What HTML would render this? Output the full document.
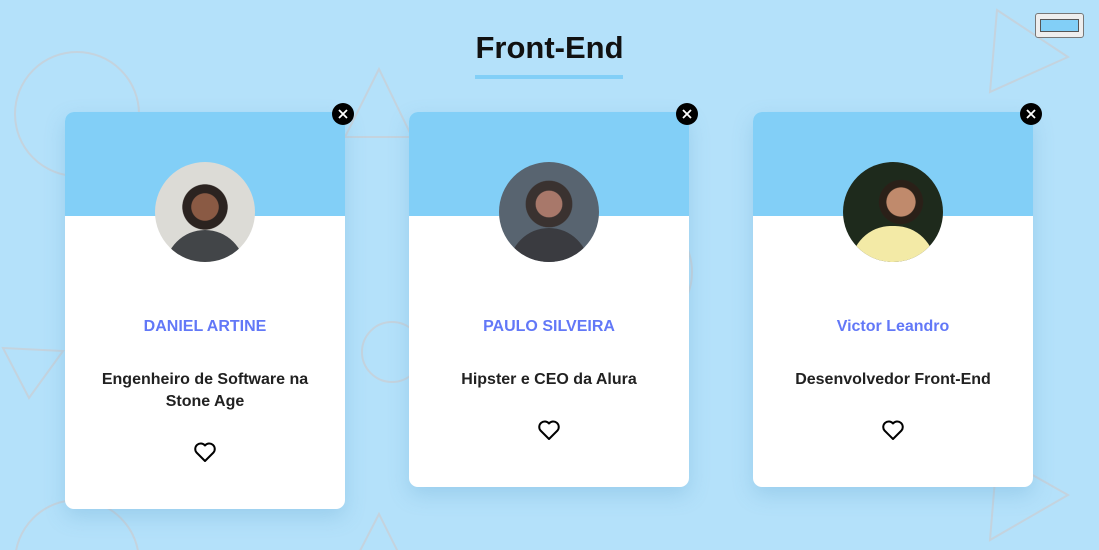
<!DOCTYPE html>
<html><head><meta charset="utf-8"><style>
*{box-sizing:border-box;margin:0;padding:0}
html,body{width:1099px;height:550px;overflow:hidden}
body{background:#b4e1fa;font-family:"Liberation Sans","DejaVu Sans",sans-serif;position:relative}
svg.bg{position:absolute;left:0;top:0}
h1{position:absolute;top:30px;left:0;width:1099px;text-align:center;font-size:31px;font-weight:bold;color:#111}
.ul{position:absolute;left:475px;top:75px;width:148px;height:4px;background:#82cff7}
.btn{position:absolute;left:1035px;top:13px;width:49px;height:25px;background:#eee;border:1px solid #777;border-radius:3px}
.btn i{position:absolute;left:4px;top:5px;width:39px;height:13px;background:#82cff7;border:1px solid #555}
.card{position:absolute;top:112px;width:280px;background:#fff;border-radius:9px;box-shadow:0 8px 20px rgba(80,150,200,.25);text-align:center}
.card .hd{height:104px;background:#82cff7;border-radius:9px 9px 0 0}
.av{position:absolute;left:90px;top:50px;width:100px;height:100px;border-radius:50%;overflow:hidden}
.nm{position:absolute;top:206px;left:0;width:100%;font-size:16px;font-weight:bold;color:#6278f7}
.ds{position:absolute;top:257px;left:20px;width:240px;font-size:16px;font-weight:bold;color:#212121;line-height:22px}
.ht{position:absolute;left:128px;width:24px;height:22px}
.x{position:absolute;top:-9px;right:-9px;width:22px;height:22px;border-radius:50%;background:#000}
</style></head><body>
<svg class="bg" width="1099" height="550" fill="none" stroke="#c4d3de" stroke-width="2">
<circle cx="77" cy="114" r="62"/>
<polygon points="379,69 345,137 412,137"/>
<polygon points="3,348 63,351 29,398"/>
<circle cx="392" cy="352" r="30"/>
<circle cx="630" cy="272" r="62"/>
<polygon points="997,10 1068,57 990,92"/>
<polygon points="997,455 1068,495 990,540"/>
<circle cx="77" cy="562" r="62"/>
<polygon points="379,514 345,580 412,580"/>
</svg>
<h1>Front-End</h1><div class="ul"></div>
<div class="btn"><i></i></div>

<div class="card" style="left:65px;height:397px"><div class="hd"></div>
<div class="av" style="background:radial-gradient(circle at 50% 45%,#8a5a44 0 18%,#2b2320 19% 30%,#dcdbd6 31%);"><div style="position:absolute;left:10px;top:68px;width:80px;height:40px;border-radius:40px 40px 0 0;background:#424548"></div></div>
<div class="nm">DANIEL ARTINE</div>
<div class="ds">Engenheiro de Software na Stone Age</div>
<svg class="ht" style="top:329px" viewBox="0 0 24 22"><path d="M12 20 L3.5 11.5 A5 5 0 0 1 12 4.5 A5 5 0 0 1 20.5 11.5 Z" fill="none" stroke="#000" stroke-width="2" stroke-linejoin="round"/></svg>
<div class="x"><svg width="22" height="22"><path d="M7 7L15 15M15 7L7 15" stroke="#fff" stroke-width="1.8"/></svg></div></div>

<div class="card" style="left:409px;height:375px"><div class="hd"></div>
<div class="av" style="background:radial-gradient(circle at 50% 42%,#a8786a 0 17%,#3a3230 18% 30%,#586470 31%);"><div style="position:absolute;left:10px;top:66px;width:80px;height:40px;border-radius:40px 40px 0 0;background:#3a3b40"></div></div>
<div class="nm">PAULO SILVEIRA</div>
<div class="ds">Hipster e CEO da Alura</div>
<svg class="ht" style="top:307px" viewBox="0 0 24 22"><path d="M12 20 L3.5 11.5 A5 5 0 0 1 12 4.5 A5 5 0 0 1 20.5 11.5 Z" fill="none" stroke="#000" stroke-width="2" stroke-linejoin="round"/></svg>
<div class="x"><svg width="22" height="22"><path d="M7 7L15 15M15 7L7 15" stroke="#fff" stroke-width="1.8"/></svg></div></div>

<div class="card" style="left:753px;height:375px"><div class="hd"></div>
<div class="av" style="background:radial-gradient(circle at 58% 40%,#c08a6c 0 17%,#2a2018 18% 26%,#1e2a1c 27%);"><div style="position:absolute;left:8px;top:64px;width:84px;height:40px;border-radius:40px 40px 0 0;background:#f3eaa6"></div></div>
<div class="nm">Victor Leandro</div>
<div class="ds">Desenvolvedor Front-End</div>
<svg class="ht" style="top:307px" viewBox="0 0 24 22"><path d="M12 20 L3.5 11.5 A5 5 0 0 1 12 4.5 A5 5 0 0 1 20.5 11.5 Z" fill="none" stroke="#000" stroke-width="2" stroke-linejoin="round"/></svg>
<div class="x"><svg width="22" height="22"><path d="M7 7L15 15M15 7L7 15" stroke="#fff" stroke-width="1.8"/></svg></div></div>
</body></html>
